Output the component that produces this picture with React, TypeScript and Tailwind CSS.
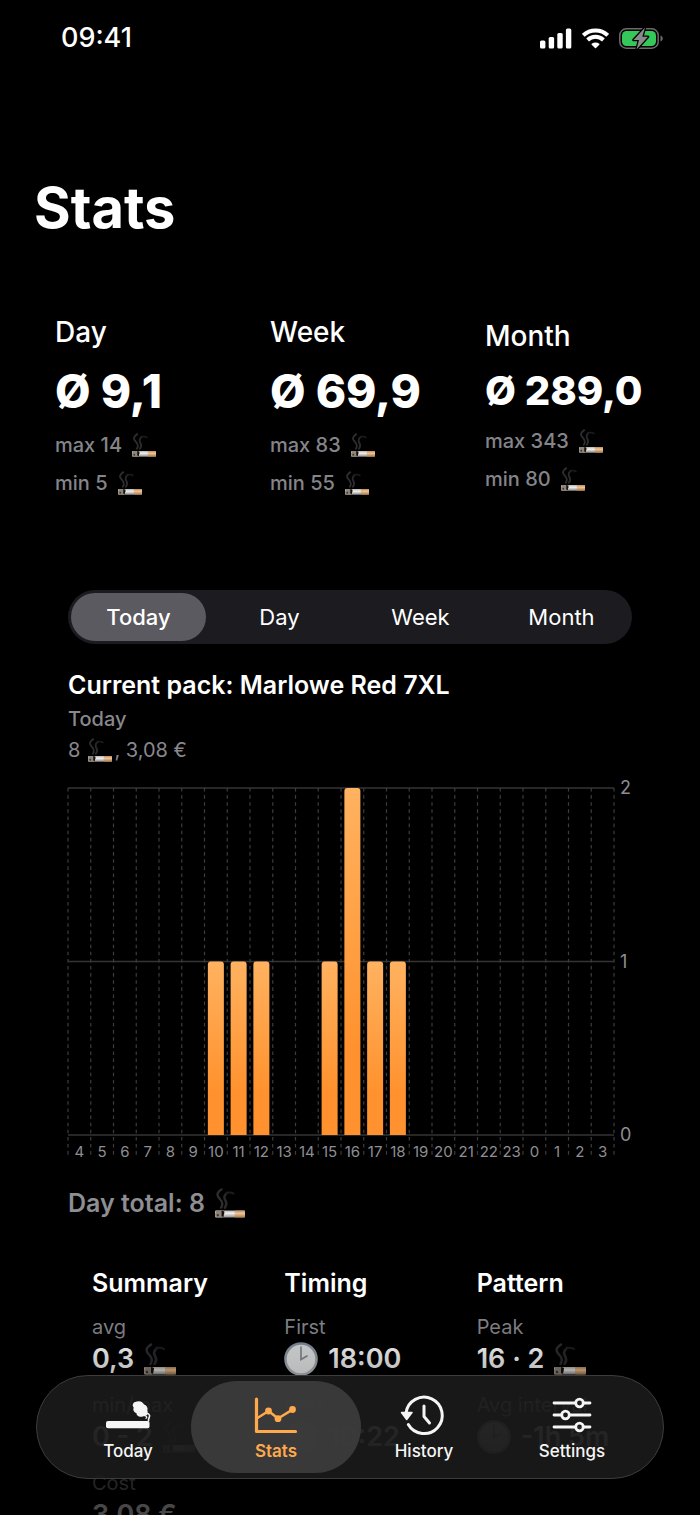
import { useState } from "react";
import type { ReactNode } from "react";
import clsx from "clsx";

const AVERAGES = [
  { label: "Day", avg: "9,1", max: 14, min: 5 },
  { label: "Week", avg: "69,9", max: 83, min: 55 },
  { label: "Month", avg: "289,0", max: 343, min: 80, compact: true },
];

const RANGES = ["Today", "Day", "Week", "Month"];

const HOURS = [4, 5, 6, 7, 8, 9, 10, 11, 12, 13, 14, 15, 16, 17, 18, 19, 20, 21, 22, 23, 0, 1, 2, 3];
const COUNTS: Record<number, number> = { 10: 1, 11: 1, 12: 1, 15: 1, 16: 2, 17: 1, 18: 1 };

function Cigarette({ className }: { className: string }) {
  return (
    <svg viewBox="0 0 32 32" className={clsx("shrink-0", className)} role="img" aria-label="cigarettes">
      <defs>
        <linearGradient id="paper" x1="0" y1="0" x2="0" y2="1">
          <stop offset="0" stopColor="#b9b5b0" />
          <stop offset="0.4" stopColor="#f1f1f1" />
          <stop offset="1" stopColor="#8f8c8a" />
        </linearGradient>
        <linearGradient id="filter" x1="0" y1="0" x2="0" y2="1">
          <stop offset="0" stopColor="#c18a57" />
          <stop offset="0.4" stopColor="#f0c79b" />
          <stop offset="1" stopColor="#a87a4c" />
        </linearGradient>
      </defs>
      <g fill="none" strokeLinecap="round">
        <path d="M7 1.500C1.500 5 1.500 8 5 11.500C8.500 15 8.500 18 6.500 21" stroke="#2e2e31" strokeWidth="2.400" />
        <path d="M13 5C8.500 9 10 11.500 11.500 14C13 17 12 19 10.500 21" stroke="#2a2a2d" strokeWidth="2.600" />
        <path d="M12 6C14 4.500 17 4.500 20 6" stroke="#1c1c1e" strokeWidth="2" />
      </g>
      <rect x="0" y="24" width="32" height="7.500" rx="1" fill="url(#paper)" />
      <rect x="21" y="24" width="11" height="7.500" rx="1" fill="url(#filter)" />
      <path d="M1 24H9L10 27L8 31.500H1L0 28Z" fill="#8d857a" />
      <path d="M7 24L10 25L9 31L7 30Z" fill="#17120f" />
      <circle cx="3" cy="29" r="1.200" fill="#4a3426" />
    </svg>
  );
}

function ClockFace() {
  return (
    <svg viewBox="0 0 34 34" className="size-[34px] shrink-0" aria-hidden="true">
      <defs>
        <linearGradient id="rim" x1="0" y1="0" x2="0" y2="1">
          <stop offset="0" stopColor="#7f8b9c" />
          <stop offset="1" stopColor="#c4c8cd" />
        </linearGradient>
        <linearGradient id="face" x1="0" y1="0" x2="0" y2="1">
          <stop offset="0" stopColor="#dcdee0" />
          <stop offset="1" stopColor="#ffffff" />
        </linearGradient>
      </defs>
      <circle cx="17" cy="17" r="16.800" fill="url(#rim)" />
      <circle cx="17" cy="17" r="14.300" fill="url(#face)" />
      <path d="M17 5V17.500L23 14" fill="none" stroke="#8a8e93" strokeWidth="1.700" strokeLinecap="round" />
    </svg>
  );
}

function StatusBar() {
  return (
    <div className="flex h-[76px] items-center justify-between pl-[61px] pr-9 text-[27px] leading-8 font-medium">
      <span>09:41</span>
      <div className="flex items-center gap-[10px]">
        <svg viewBox="0 0 32 21" className="h-[21px] w-8" fill="#fff" role="img" aria-label="Signal">
          <rect x="0" y="12.500" width="5.400" height="8" rx="1.500" />
          <rect x="8.700" y="9" width="5.400" height="11.500" rx="1.500" />
          <rect x="17.300" y="5" width="5.400" height="15.500" rx="1.500" />
          <rect x="25.900" y="0.500" width="5.400" height="20" rx="1.500" />
        </svg>
        <svg viewBox="0 0 27 21" className="h-[21px] w-[27px]" role="img" aria-label="Wi-Fi">
          <g fill="none" stroke="#fff" strokeWidth="4">
            <path d="M1.300 7.300C8 0.800 19 0.800 25.700 7.300" />
            <path d="M5.600 12C10 7.800 17 7.800 21.400 12" />
          </g>
          <path d="M9.700 15.800C12 13.900 15 13.900 17.300 15.800Q17.800 16.200 17.300 16.700L14 20.100Q13.500 20.600 13 20.100L9.700 16.700Q9.200 16.200 9.700 15.800Z" fill="#fff" />
        </svg>
        <svg viewBox="0 0 45 21" className="h-[21px] w-[45px]" role="img" aria-label="Charging">
          <rect x="0.800" y="0.800" width="38.400" height="19.400" rx="6.500" fill="none" stroke="#6b6b6d" strokeWidth="1.500" />
          <path d="M41.500 7.500C44.500 8.500 44.500 12.500 41.500 13.500Z" fill="#6b6b6d" />
          <rect x="3" y="3" width="34" height="15" rx="4.500" fill="#34c759" />
          <path d="M26 -0.500L14.500 12H20L17.500 21.500L29 8.800H23.300Z" fill="#8a8a8c" stroke="#000" strokeWidth="2.600" paintOrder="stroke" strokeLinejoin="round" />
        </svg>
      </div>
    </div>
  );
}

function HourChart() {
  const top = 2;
  const base = 349;
  const step = 546 / 24;
  const unit = (base - top) / 2;

  return (
    <svg viewBox="0 0 564 374" className="mt-[22px] block w-full overflow-visible" role="img" aria-label="Cigarettes per hour">
      <defs>
        <linearGradient id="bar" x1="0" y1="0" x2="0" y2="1">
          <stop offset="0" stopColor="#ffb260" />
          <stop offset="0.750" stopColor="#ff922e" />
          <stop offset="1" stopColor="#ff922e" />
        </linearGradient>
      </defs>
      {[0, 1, 2].map((n) => (
        <g key={n}>
          <line x1="0" x2="546" y1={base - n * unit} y2={base - n * unit} stroke="#343436" strokeWidth="1.300" />
          <text x="552" y={base - n * unit + 6} fontSize="18" fill="#8e8e93">{n}</text>
        </g>
      ))}
      {Array.from({ length: 25 }, (_, i) => (
        <line key={i} x1={i * step} x2={i * step} y1={top} y2="372" stroke="#3c3c3e" strokeWidth="1.200" strokeDasharray="3.560 3.560" />
      ))}
      {HOURS.map((hour, i) => {
        const count = COUNTS[hour] ?? 0;
        const x = i * step + step / 2;
        const y = base - count * unit;
        return (
          <g key={hour}>
            {count > 0 && (
              <path d={`M${x - 8} ${base}V${y + 3}q0 -3 3 -3h10q3 0 3 3V${base}Z`} fill="url(#bar)" />
            )}
            <text x={x} y="371" textAnchor="middle" fontSize="15" fill="#8e8e93">{hour}</text>
          </g>
        );
      })}
    </svg>
  );
}

function Metric({ label, children }: { label: string; children: ReactNode }) {
  return (
    <div className="mb-[14px]">
      <dt className="text-xl leading-7 text-[#7f7f84]">{label}</dt>
      <dd className="flex h-9 items-center gap-[10px] text-[27px] leading-9 font-semibold whitespace-nowrap">{children}</dd>
    </div>
  );
}

function Details() {
  return (
    <div className="mt-12 grid grid-cols-3 pr-[31px] pl-[92px]">
      <section>
        <h3 className="mb-[14px] text-[25px] leading-8 font-semibold">Summary</h3>
        <dl>
          <Metric label="avg">0,3 <Cigarette className="size-8" /></Metric>
          <Metric label="min/max">0 - 2 <Cigarette className="size-8" /></Metric>
          <Metric label="Cost">3,08 €</Metric>
        </dl>
      </section>
      <section>
        <h3 className="mb-[14px] text-[25px] leading-8 font-semibold">Timing</h3>
        <dl>
          <Metric label="First"><ClockFace /> 18:00</Metric>
          <Metric label="Last"><ClockFace /> 10:22</Metric>
        </dl>
      </section>
      <section>
        <h3 className="mb-[14px] text-[25px] leading-8 font-semibold">Pattern</h3>
        <dl>
          <Metric label="Peak">16 · 2 <Cigarette className="size-8" /></Metric>
          <Metric label="Avg interval"><ClockFace /> -1h 5m</Metric>
        </dl>
      </section>
    </div>
  );
}

const TABS = [
  {
    label: "Today",
    icon: (
      <g fill="currentColor">
        <rect x="0" y="28" width="43.500" height="7.200" rx="2" />
        <path d="M30 9.500C33 8.500 36 9.500 37.500 12C40 13 41.500 15 40.500 17.500C42 20 40 23 37 22.500C34 24 31 22 31 19.500C28.500 19 27.500 16.500 28.500 14.500C26.500 12.500 27.500 10 30 9.500Z" stroke="currentColor" strokeWidth="1.600" strokeLinejoin="round" />
        <path d="M39 21C42.500 19.500 44.500 22 43.200 24.500C42.300 26 42.500 27 42.500 28.500" fill="none" stroke="currentColor" strokeWidth="1.600" />
        <path d="M38.500 23C41 22.500 41.500 25 39.500 25.500" fill="none" stroke="currentColor" strokeWidth="1.200" />
      </g>
    ),
  },
  {
    label: "Stats",
    icon: (
      <g fill="none" stroke="currentColor" strokeWidth="3.200" strokeLinecap="round" strokeLinejoin="round">
        <path d="M2.500 6V38.500H41.500" />
        <path d="M3.500 25L14.500 18L24 25.500L38.500 16.700" strokeWidth="2.600" />
        <g fill="currentColor" stroke="none">
          <circle cx="14.500" cy="18" r="3.400" />
          <circle cx="24" cy="25.700" r="3.400" />
          <circle cx="38.500" cy="16.500" r="3.400" />
        </g>
      </g>
    ),
  },
  {
    label: "History",
    icon: (
      <g fill="none" stroke="currentColor" strokeWidth="3" strokeLinecap="round" strokeLinejoin="round">
        <path d="M6.300 31.500A18.200 18.200 0 1 0 4 20" />
        <path d="M22 13V23.500L27.500 30" />
        <path d="M-0.500 19.500H10L4.700 26.500Z" fill="currentColor" strokeWidth="1.500" />
      </g>
    ),
  },
  {
    label: "Settings",
    icon: (
      <g fill="none" stroke="currentColor" strokeWidth="2.800" strokeLinecap="round">
        <path d="M4 10H25.500M33.500 10H40" />
        <path d="M4 22H11.500M19.500 22H40" />
        <path d="M4 34H25.500M33.500 34H40" />
        <circle cx="29.500" cy="10" r="3.800" />
        <circle cx="15.500" cy="22" r="3.800" />
        <circle cx="29.500" cy="34" r="3.800" />
      </g>
    ),
  },
];

function TabBar() {
  const [active, setActive] = useState("Stats");

  return (
    <nav className="absolute inset-x-9 bottom-9 rounded-full border border-[#3c3c3d] bg-[#1b1b1b]/88 px-[17px] py-[5px]">
      <div className="grid grid-cols-4">
        {TABS.map((tab) => (
          <button
            key={tab.label}
            type="button"
            onClick={() => setActive(tab.label)}
            className={clsx(
              "-mx-[11px] flex flex-col items-center gap-1 rounded-full py-3",
              active === tab.label ? "bg-[#3d3d3d]/90 text-[#ffa94d]" : "text-[#f5f5f5]"
            )}
          >
            <svg viewBox="0 0 44 44" className="size-11 overflow-visible" aria-hidden="true">{tab.icon}</svg>
            <span className={clsx("text-[17px] leading-5", active === tab.label ? "font-semibold" : "font-medium")}>
              {tab.label}
            </span>
          </button>
        ))}
      </div>
    </nav>
  );
}

export default function App() {
  const [range, setRange] = useState("Today");

  return (
    <div className="relative h-screen overflow-hidden bg-black font-['Inter',sans-serif] text-white">
      <main className="h-full overflow-y-auto [scrollbar-width:none]">
        <StatusBar />
        <h1 className="mt-[100px] px-[34px] text-[56px] leading-[64px] font-bold">Stats</h1>

        {/* Averages */}
        <div className="mt-[76px] grid grid-cols-3 items-center pl-[55px]">
          {AVERAGES.map((item) => (
            <section key={item.label}>
              <h2 className="text-[28px] leading-8 font-medium">{item.label}</h2>
              <p
                className={clsx(
                  "mt-4 mb-3 font-extrabold whitespace-nowrap",
                  item.compact ? "text-[40px] leading-[46px]" : "text-[46px] leading-[54px]"
                )}
              >
                Ø {item.avg}
              </p>
              <p className="flex items-center gap-[10px] text-xl leading-[30px] font-medium text-[#848489]">
                max {item.max} <Cigarette className="size-6" />
              </p>
              <p className="mt-2 flex items-center gap-[10px] text-xl leading-[30px] font-medium text-[#848489]">
                min {item.min} <Cigarette className="size-6" />
              </p>
            </section>
          ))}
        </div>

        <div className="mt-[92px] px-[68px]">
          {/* Range picker */}
          <div role="tablist" className="grid grid-cols-4 rounded-full bg-[#1c1b20]">
            {RANGES.map((name) => (
              <button
                key={name}
                type="button"
                role="tab"
                aria-selected={range === name}
                onClick={() => setRange(name)}
                className={clsx(
                  "m-[3px] rounded-full py-2 text-[22px] leading-8",
                  range === name ? "bg-[#5b5a60] font-medium" : "font-normal"
                )}
              >
                {name}
              </button>
            ))}
          </div>

          <h2 className="mt-[25px] text-[25px] leading-8 font-semibold">Current pack: Marlowe Red 7XL</h2>
          <p className="mt-1 text-xl leading-7 font-medium text-[#88888d]">Today</p>
          <p className="mt-[3px] flex items-center text-xl leading-7 text-[#88888d]">
            8 <Cigarette className="mr-[2px] ml-2 size-6" />, 3,08 €
          </p>

          <HourChart />

          <p className="mt-[27px] flex items-center gap-[10px] text-[25px] leading-8 font-semibold text-[#8e8e93]">
            Day total: 8 <Cigarette className="size-[30px]" />
          </p>
        </div>

        <Details />
      </main>

      {/* Content dims as it runs under the tab bar */}
      <div className="pointer-events-none absolute inset-x-0 bottom-0 h-48 bg-linear-to-b from-transparent via-black/72 via-70% to-black/72" />
      <TabBar />
    </div>
  );
}
